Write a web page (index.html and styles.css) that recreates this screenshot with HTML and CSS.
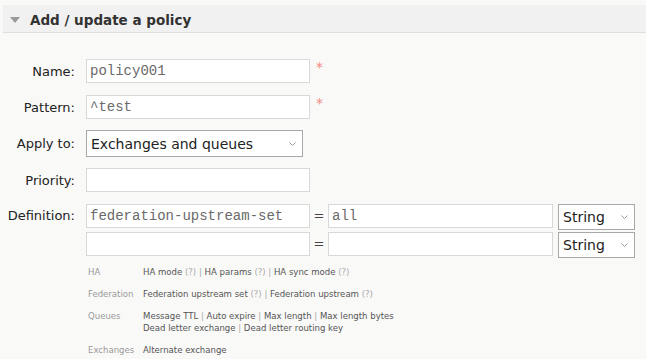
FILE: index.html
```html
<!DOCTYPE html>
<html lang="en">

<head>
    <title>Add / update a policy</title>
    <link rel="stylesheet" href="styles.css">
</head>

<body>
    <div class="section">
        <h2 class="section-title"><span class="toggle"></span>Add / update a policy</h2>
        <form class="policy-form">
            <div class="row">
                <label for="name">Name:</label>
                <input type="text" id="name" class="mono" value="policy001" />
                <span class="mand">*</span>
            </div>
            <div class="row row-tight">
                <label for="pattern">Pattern:</label>
                <input type="text" id="pattern" class="mono" value="^test" />
                <span class="mand">*</span>
            </div>
            <div class="row row-tight">
                <label for="applyto">Apply to:</label>
                <select id="applyto" class="apply">
                    <option selected>Exchanges and queues</option>
                    <option>Exchanges</option>
                    <option>Queues</option>
                </select>
            </div>
            <div class="row">
                <label for="priority">Priority:</label>
                <input type="text" id="priority" class="mono" />
            </div>
            <div class="row def-row">
                <label>Definition:</label>
                <div class="multifield">
                    <div class="pair">
                        <input type="text" class="mono" value="federation-upstream-set" />
                        <span class="eq">=</span>
                        <input type="text" class="mono value" value="all" />
                        <select class="type">
                            <option selected>String</option>
                            <option>Number</option>
                            <option>Boolean</option>
                            <option>List</option>
                        </select>
                    </div>
                    <div class="pair">
                        <input type="text" class="mono" />
                        <span class="eq">=</span>
                        <input type="text" class="mono value" />
                        <select class="type">
                            <option selected>String</option>
                            <option>Number</option>
                            <option>Boolean</option>
                            <option>List</option>
                        </select>
                    </div>
                </div>
            </div>
            <table class="help">
                <tr>
                    <th>HA</th>
                    <td>HA mode <span class="q">(?)</span> <span class="sep">|</span> HA params <span class="q">(?)</span> <span class="sep">|</span> HA sync mode <span class="q">(?)</span></td>
                </tr>
                <tr>
                    <th>Federation</th>
                    <td>Federation upstream set <span class="q">(?)</span> <span class="sep">|</span> Federation upstream <span class="q">(?)</span></td>
                </tr>
                <tr>
                    <th>Queues</th>
                    <td>Message TTL <span class="sep">|</span> Auto expire <span class="sep">|</span> Max length <span class="sep">|</span> Max length bytes<br>Dead letter exchange <span class="sep">|</span> Dead letter routing key</td>
                </tr>
                <tr>
                    <th>Exchanges</th>
                    <td>Alternate exchange</td>
                </tr>
            </table>
        </form>
    </div>
</body>

</html>
```

FILE: styles.css
```css
body {
    margin: 0;
    padding: 5px 0 0 3px;
    background: #f9f9f8;
    color: #333;
    font-family: "DejaVu Sans", Verdana, sans-serif;
    font-size: 13px;
}

.section-title {
    margin: 0;
    height: 28px;
    padding: 2px 0 0 7px;
    box-sizing: border-box;
    display: flex;
    align-items: center;
    gap: 10px;
    background: #f1f1f1;
    border-bottom: 1px solid #dedede;
    font-size: 13.5px;
    font-weight: bold;
    color: #333;
}

.toggle {
    width: 0;
    height: 0;
    border-left: 5px solid transparent;
    border-right: 5px solid transparent;
    border-top: 6px solid #9a9a9a;
}

.policy-form {
    padding-top: 26px;
    display: flex;
    flex-direction: column;
}

.row {
    display: flex;
    align-items: center;
    margin-bottom: 12px;
}

.row-tight {
    margin-bottom: 11px;
}

.row label {
    width: 72px;
    text-align: right;
    margin-right: 11px;
    color: #222;
}

.def-row {
    align-items: flex-start;
    margin-bottom: 8px;
}

.def-row label {
    padding-top: 4px;
}

input[type="text"] {
    box-sizing: border-box;
    width: 224px;
    height: 24px;
    border: 1px solid #d8d8d8;
    background: #fff;
    padding: 1px 3px;
    margin: 0;
    outline: none;
}

.mono {
    font-family: "Liberation Mono", "Courier New", monospace;
    font-size: 14px;
    color: #6a6a6a;
}

.mand {
    color: #f08a80;
    font-size: 14px;
    margin-left: 6px;
    align-self: flex-start;
}

select {
    box-sizing: border-box;
    appearance: none;
    border: 1px solid #a8a8a8;
    background: #fff;
    color: #222;
    margin: 0;
    padding: 0 4px;
    font-family: "DejaVu Sans", Verdana, sans-serif;
    font-size: 14px;
    background-image: url("data:image/svg+xml;utf8,<svg xmlns='http://www.w3.org/2000/svg' width='7' height='4' viewBox='0 0 7 4'><path d='M0.5 0.5 L3.5 3.5 L6.5 0.5' fill='none' stroke='%23999' stroke-width='1'/></svg>");
    background-repeat: no-repeat;
    background-position: right 6px center;
}

.apply {
    width: 217px;
    height: 27px;
}

.multifield {
    display: flex;
    flex-direction: column;
    gap: 2px;
}

.pair {
    display: flex;
    align-items: flex-start;
}

.eq {
    width: 18px;
    text-align: center;
    color: #444;
    line-height: 24px;
}

.pair .value {
    width: 225px;
}

.type {
    width: 77px;
    height: 26px;
    margin-left: 5px;
}

.help {
    margin-left: 85px;
    border-collapse: collapse;
    font-family: "DejaVu Sans Condensed", "DejaVu Sans", sans-serif;
    font-size: 9.5px;
    color: #555;
}

.help th {
    width: 55px;
    padding: 0 0 10px 0;
    text-align: left;
    font-weight: normal;
    color: #9a9a9a;
    vertical-align: top;
    line-height: 12px;
}

.help td {
    vertical-align: top;
    padding: 0 0 10px 0;
    line-height: 12px;
}

.help .q,
.help .sep {
    color: #aaa;
}
```
